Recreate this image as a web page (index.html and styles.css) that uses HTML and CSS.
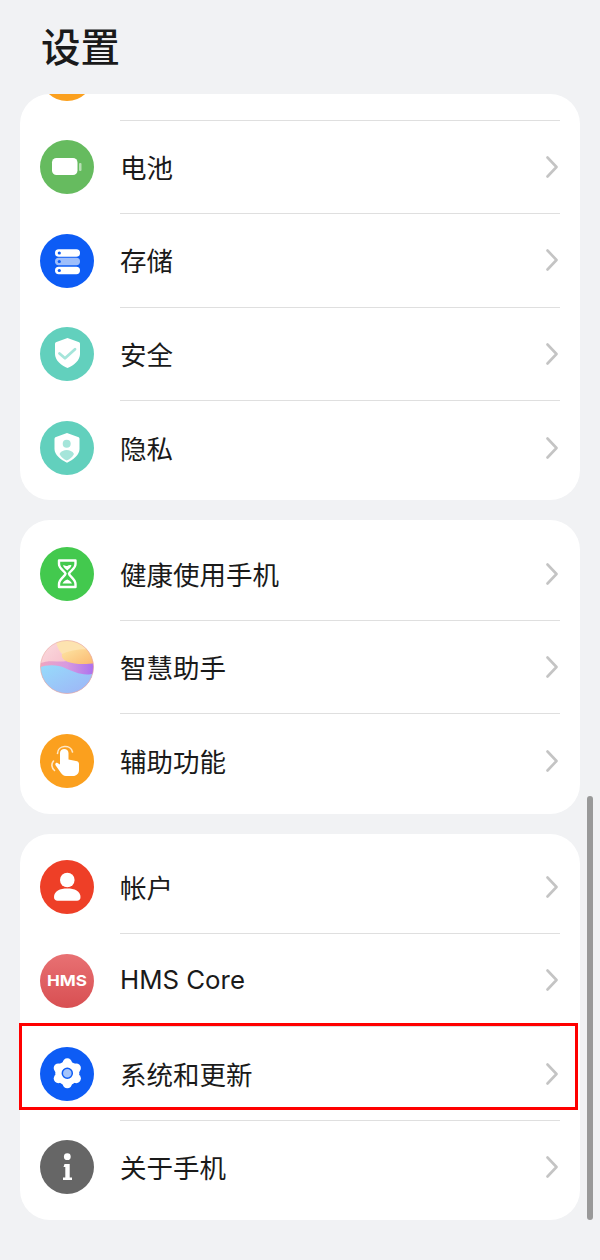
FILE: index.html
```html
<!DOCTYPE html>
<html lang="zh-CN">
<head>
    <meta charset="UTF-8">
    <meta name="viewport" content="width=device-width, initial-scale=1.0">
    <title>设置</title>
    <link rel="stylesheet" href="styles.css">
</head>
<body>
<div class="screen">
    <h1 class="title">设置</h1>

    <div class="card card-first">
        <div class="row row-clipped">
            <svg class="icon" viewBox="0 0 54 54"><circle cx="27" cy="27" r="27" fill="#fba01e"/></svg>
            <div class="row-body"></div>
        </div>
        <div class="row">
            <svg class="icon" viewBox="0 0 54 54">
                <circle cx="27" cy="27" r="27" fill="#66bb5f"/>
                <rect x="12" y="18" width="25.5" height="17" rx="4.5" fill="#fff"/>
                <rect x="39" y="23" width="2.5" height="8" rx="1" fill="#fff" opacity=".55"/>
            </svg>
            <div class="row-body"><span class="label">电池</span><svg class="chev" viewBox="0 0 12 22"><path d="M1.5 1.5 10.5 11 1.5 20.5"/></svg></div>
        </div>
        <div class="row">
            <svg class="icon" viewBox="0 0 54 54">
                <circle cx="27" cy="27" r="27" fill="#0d5cf5"/>
                <rect x="15" y="15.300" width="25" height="7.500" rx="3.700" fill="#fff"/>
                <rect x="15" y="23.700" width="25" height="7.500" rx="3.700" fill="#fff" opacity=".6"/>
                <rect x="15" y="32.700" width="25" height="7.500" rx="3.700" fill="#fff"/>
                <circle cx="19.300" cy="19" r="1.600" fill="#0d5cf5"/>
                <circle cx="19.300" cy="27.500" r="1.600" fill="#0d5cf5"/>
                <circle cx="19.300" cy="36.500" r="1.600" fill="#0d5cf5"/>
            </svg>
            <div class="row-body"><span class="label">存储</span><svg class="chev" viewBox="0 0 12 22"><path d="M1.5 1.5 10.5 11 1.5 20.5"/></svg></div>
        </div>
        <div class="row">
            <svg class="icon" viewBox="0 0 54 54">
                <circle cx="27" cy="27" r="27" fill="#62d0bd"/>
                <path d="M27.500 11 38.500 15C39.500 15.400 40 16 40 17V27C40 33.500 33.500 38.500 27.500 41 21.500 38.500 15 33.500 15 27V17C15 16 15.500 15.400 16.500 15Z" fill="#fff"/>
                <path d="M19.500 26.500 25 31.300 35 22.300" fill="none" stroke="#a5e5da" stroke-width="2.800" stroke-linecap="round" stroke-linejoin="round"/>
            </svg>
            <div class="row-body"><span class="label">安全</span><svg class="chev" viewBox="0 0 12 22"><path d="M1.5 1.5 10.5 11 1.5 20.5"/></svg></div>
        </div>
        <div class="row row-last">
            <svg class="icon" viewBox="0 0 54 54">
                <circle cx="27" cy="27" r="27" fill="#62d0bd"/>
                <path d="M27 12 38 16C39 16.400 39.500 17 39.500 18V28C39.500 34 33 39 27 41.700 21 39 14.500 34 14.500 28V18C14.500 17 15 16.400 16 16Z" fill="#fff"/>
                <circle cx="26.700" cy="22.700" r="4" fill="#a5e5da"/>
                <path d="M19.500 33C21 30 24 29 26.700 29 29.500 29 32.500 30 34 33 32.500 36 29.500 38.500 26.700 39.500 24 38.500 21 36 19.500 33Z" fill="#a5e5da"/>
            </svg>
            <div class="row-body"><span class="label">隐私</span><svg class="chev" viewBox="0 0 12 22"><path d="M1.5 1.5 10.5 11 1.5 20.5"/></svg></div>
        </div>
    </div>

    <div class="card">
        <div class="row">
            <svg class="icon" viewBox="0 0 54 54">
                <circle cx="27" cy="27" r="27" fill="#43c94e"/>
                <path d="M19 13.500H35.500V17C35.500 22 29.500 24 29 26.700 29.500 29.500 35.500 32 35.500 37V40H19V37C19 32 25 29.500 25.500 26.700 25 24 19 22 19 17Z" fill="none" stroke="#fff" stroke-width="2.400" stroke-linejoin="round"/>
                <path d="M23 18.500C24.500 17.500 26 19.500 27.300 19 28.500 18.500 30 17.500 31.500 18.500 30.500 21 28.500 22 27.300 23.500 26 22 24 21 23 18.500Z" fill="#fff"/>
                <path d="M22.500 36.500C23.500 34 26 33 27.300 32.500 28.500 33 31 34 32 36.500Z" fill="#fff"/>
            </svg>
            <div class="row-body"><span class="label">健康使用手机</span><svg class="chev" viewBox="0 0 12 22"><path d="M1.5 1.5 10.5 11 1.5 20.5"/></svg></div>
        </div>
        <div class="row">
            <svg class="icon" viewBox="0 0 54 54">
                <defs>
                    <clipPath id="orb"><circle cx="27" cy="27" r="26.500"/></clipPath>
                    <filter id="soft"><feGaussianBlur stdDeviation=".7"/></filter>
                    <linearGradient id="orbTop" x1="0" y1="0" x2="1" y2="1">
                        <stop offset="0" stop-color="#fbdde0"/>
                        <stop offset="1" stop-color="#f2a0b6"/>
                    </linearGradient>
                    <linearGradient id="orbSun" x1="0" y1="0" x2="1" y2="1">
                        <stop offset="0" stop-color="#fde9a8"/>
                        <stop offset="1" stop-color="#fbb66e"/>
                    </linearGradient>
                    <linearGradient id="orbBand" x1="0" y1="0" x2="1" y2="0">
                        <stop offset="0" stop-color="#f2a6bd"/>
                        <stop offset=".5" stop-color="#d79ae0"/>
                        <stop offset="1" stop-color="#a86cf0"/>
                    </linearGradient>
                    <linearGradient id="orbSea" x1="0" y1="0" x2="1" y2="1">
                        <stop offset="0" stop-color="#96dcfb"/>
                        <stop offset="1" stop-color="#9fb0f6"/>
                    </linearGradient>
                </defs>
                <rect width="54" height="54" fill="url(#orbTop)" clip-path="url(#orb)"/>
                <g clip-path="url(#orb)">
                    <g filter="url(#soft)">
                        <path d="M-2 24C12 18 20 24 30 20 40 17 48 22 56 20V38H-2Z" fill="url(#orbBand)"/>
                        <path d="M22 14C26 7 38 8 56 6V23C44 25 34 24 28 22 24 20 21 18 22 14Z" fill="url(#orbSun)"/>
                        <path d="M16 -2H56V10C44 8 30 10 22 14 18 9 16 5 16 -2Z" fill="#fde3b0"/>
                        <path d="M-2 28C8 24 18 25 25 28 34 32 44 37 56 33V56H-2Z" fill="url(#orbSea)"/>
                    </g>
                </g>
                <circle cx="27" cy="27" r="26.500" fill="none" stroke="#e8a9a0" stroke-opacity=".6"/>
            </svg>
            <div class="row-body"><span class="label">智慧助手</span><svg class="chev" viewBox="0 0 12 22"><path d="M1.5 1.5 10.5 11 1.5 20.5"/></svg></div>
        </div>
        <div class="row">
            <svg class="icon" viewBox="0 0 54 54">
                <circle cx="27" cy="27" r="27" fill="#fba01e"/>
                <path d="M20 19V30.500L17.500 29C16 28.300 14.500 30 15.700 31.500L21 39C22 40.500 23.500 42 26 42H33C36.500 42 39 39.500 39 36V30C39 28 37.500 27.300 36 27L28.500 25.500V19C28.500 13.500 20 13.500 20 19Z" fill="#fff"/>
                <path d="M17.500 19.500C17.500 11 31 10 32.500 18" fill="none" stroke="#fff" stroke-opacity=".75" stroke-width="1.600" stroke-linecap="round"/>
                <path d="M13.500 27C11 30 11.500 34 14.500 36.500" fill="none" stroke="#fff" stroke-opacity=".75" stroke-width="1.600" stroke-linecap="round"/>
            </svg>
            <div class="row-body row-body-end"><span class="label">辅助功能</span><svg class="chev" viewBox="0 0 12 22"><path d="M1.5 1.5 10.5 11 1.5 20.5"/></svg></div>
        </div>
    </div>

    <div class="card">
        <div class="row">
            <svg class="icon" viewBox="0 0 54 54">
                <circle cx="27" cy="27" r="27" fill="#ee3f27"/>
                <circle cx="27.300" cy="20" r="7.300" fill="#fff"/>
                <path d="M14 37C14 31 20 28.500 27.300 28.500 34.500 28.500 40.500 31 40.500 37 40.500 39.500 39 40.700 37 40.700H17.500C15.500 40.700 14 39.500 14 37Z" fill="#fff"/>
            </svg>
            <div class="row-body"><span class="label">帐户</span><svg class="chev" viewBox="0 0 12 22"><path d="M1.5 1.5 10.5 11 1.5 20.5"/></svg></div>
        </div>
        <div class="row">
            <svg class="icon" viewBox="0 0 54 54">
                <defs>
                    <linearGradient id="hms" x1="0" y1="0" x2="0" y2="1">
                        <stop offset="0" stop-color="#e87173"/>
                        <stop offset="1" stop-color="#d84f52"/>
                    </linearGradient>
                </defs>
                <circle cx="27" cy="27" r="27" fill="url(#hms)"/>
                <text class="hms" x="7" y="32" textLength="40" lengthAdjust="spacingAndGlyphs">HMS</text>
            </svg>
            <div class="row-body"><span class="label label-latin">HMS Core</span><svg class="chev" viewBox="0 0 12 22"><path d="M1.5 1.5 10.5 11 1.5 20.5"/></svg></div>
        </div>
        <div class="row">
            <svg class="icon" viewBox="0 0 54 54">
                <circle cx="27" cy="27" r="27" fill="#0d5cf5"/>
                <g fill="#fff">
                    <circle cx="27.300" cy="26.300" r="12"/>
                    <circle cx="27.300" cy="16" r="4.700"/>
                    <circle cx="27.300" cy="36.600" r="4.700"/>
                    <circle cx="18.400" cy="21.100" r="4.700"/>
                    <circle cx="36.200" cy="21.100" r="4.700"/>
                    <circle cx="18.400" cy="31.500" r="4.700"/>
                    <circle cx="36.200" cy="31.500" r="4.700"/>
                </g>
                <circle cx="27.300" cy="26.300" r="5" fill="#a4c4fb" stroke="#0d5cf5" stroke-width="1.500"/>
            </svg>
            <div class="row-body"><span class="label">系统和更新</span><svg class="chev" viewBox="0 0 12 22"><path d="M1.5 1.5 10.5 11 1.5 20.5"/></svg></div>
        </div>
        <div class="row row-last">
            <svg class="icon" viewBox="0 0 54 54">
                <circle cx="27" cy="27" r="27" fill="#666"/>
                <g fill="#fff">
                    <circle cx="27.300" cy="16.700" r="3.400"/>
                    <path d="M24.500 24H29.700V37.500H32V40H23V37.500H25.300V27H23.500Z"/>
                </g>
            </svg>
            <div class="row-body"><span class="label">关于手机</span><svg class="chev" viewBox="0 0 12 22"><path d="M1.5 1.5 10.5 11 1.5 20.5"/></svg></div>
        </div>
    </div>

    <div class="scrollbar"></div>
    <div class="highlight"></div>
</div>
</body>
</html>
```

FILE: styles.css
```css
* {
    box-sizing: border-box;
}
body {
    margin: 0;
    background: #f1f2f4;
    color: #1a1a1a;
    font-family: "Noto Sans CJK SC", "Noto Sans", sans-serif;
}
.screen {
    position: relative;
    height: 1260px;
    overflow: hidden;
    padding: 0 20px;
}
.title {
    height: 94px;
    margin: 0;
    padding: 16px 0 0 21px;
    font-size: 39.5px;
    font-weight: 500;
    line-height: 58px;
}
.card {
    background: #fff;
    border-radius: 30px;
    padding: 7px 0 6px;
    margin-bottom: 20px;
    overflow: hidden;
}
.card-first {
    padding-top: 0;
}
.row {
    display: flex;
    align-items: center;
    gap: 26px;
    height: 93.4px;
    padding: 0 20px;
}
.row-clipped {
    margin-top: -66.6px;
}
.icon {
    flex: none;
    width: 54px;
    height: 54px;
}
.row-body {
    flex: 1;
    display: flex;
    align-items: center;
    justify-content: space-between;
    height: 100%;
    padding-right: 2px;
    border-bottom: 1px solid #dfdfdf;
}
.row-last .row-body,
.row-body-end {
    border-bottom: 0;
}
.label {
    font-size: 26.5px;
    line-height: 36px;
}
.label-latin {
    font-family: "Inter", sans-serif;
    font-size: 25.8px;
}
.chev {
    width: 12px;
    height: 22px;
    fill: none;
    stroke: #c4c4c4;
    stroke-width: 2.6;
    stroke-linecap: round;
    stroke-linejoin: round;
}
.hms {
    fill: #fff;
    font-family: "Inter", sans-serif;
    font-size: 15px;
    font-weight: 700;
}
.scrollbar {
    position: absolute;
    left: 587px;
    top: 796px;
    width: 6px;
    height: 424px;
    border-radius: 3px;
    background: #999;
}
.highlight {
    position: absolute;
    left: 19px;
    top: 1023px;
    width: 559px;
    height: 87px;
    border: 3px solid #ff0000;
}
```
